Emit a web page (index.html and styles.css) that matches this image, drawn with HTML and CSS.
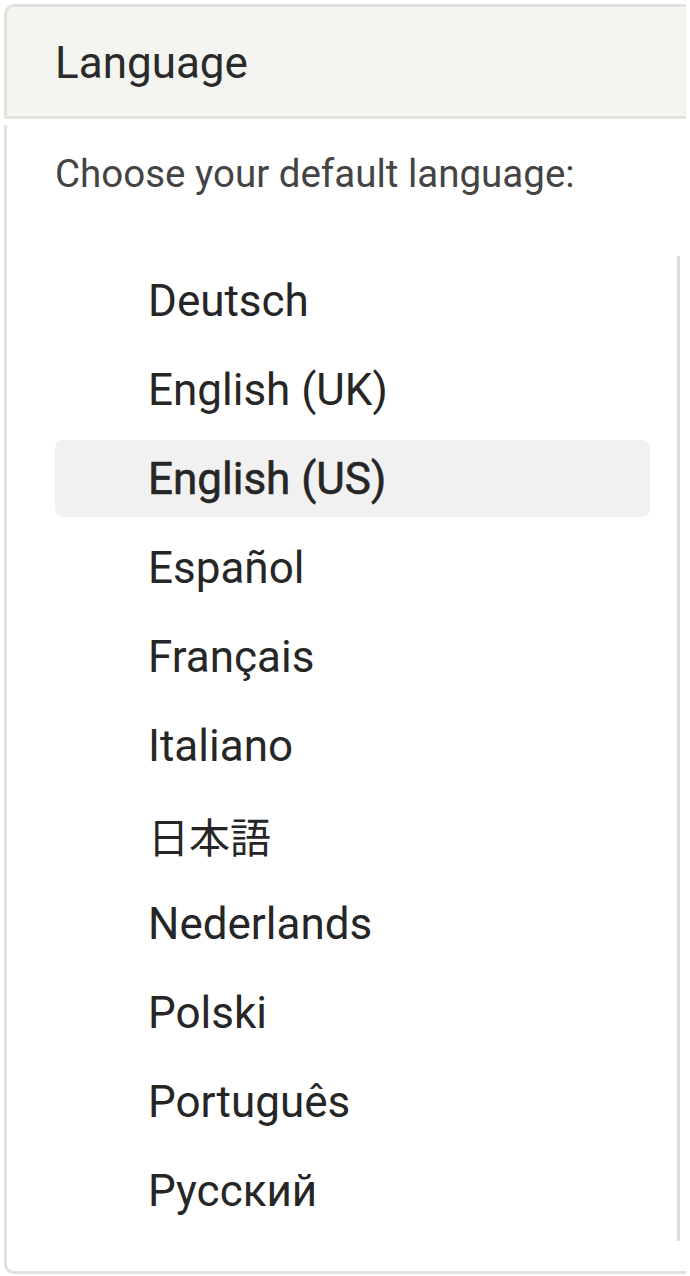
FILE: index.html
```html
<!DOCTYPE html>
<html lang="en">
<head>
<meta charset="utf-8">
<title>Language</title>
<link rel="stylesheet" href="styles.css">
</head>
<body>
<div class="panel">
  <div class="panel-header">
    <h2 class="panel-title">Language</h2>
  </div>
  <div class="panel-body">
    <p class="prompt">Choose your default language:</p>
    <ul class="lang-list">
      <li class="lang-item">Deutsch</li>
      <li class="lang-item">English (UK)</li>
      <li class="lang-item is-selected">English (US)</li>
      <li class="lang-item">Español</li>
      <li class="lang-item">Français</li>
      <li class="lang-item">Italiano</li>
      <li class="lang-item lang-cjk">日本語</li>
      <li class="lang-item">Nederlands</li>
      <li class="lang-item">Polski</li>
      <li class="lang-item">Português</li>
      <li class="lang-item">Русский</li>
    </ul>
  </div>
</div>
</body>
</html>
```
FILE: styles.css
```css
html, body {
  margin: 0;
  padding: 0;
  background: #ffffff;
}

body {
  font-family: Roboto, "Noto Sans", "Liberation Sans", sans-serif;
  color: #222222;
  padding: 4px 4px 0 4px;
}

.panel {
  width: 682px;
}

.panel-header {
  height: 107px;
  background: #f4f4f1;
  border-top: 3px solid #e1e1dd;
  border-left: 3px solid #e1e1dd;
  border-bottom: 3px solid #e1e1dd;
  border-top-left-radius: 10px;
  display: flex;
  align-items: center;
  padding-left: 48px;
  padding-top: 2px;
  box-sizing: content-box;
}

.panel-title {
  margin: 0;
  font-size: 44px;
  font-weight: 400;
  color: #2a2a2a;
  line-height: 1;
}

.panel-body {
  margin-top: 6px;
  border-left: 3px solid #e1e1dd;
  border-bottom: 3px solid #e1e1dd;
  border-bottom-left-radius: 10px;
  padding: 23px 0 30px 48px;
}

.prompt {
  margin: 0;
  font-size: 38.5px;
  line-height: 52px;
  color: #444444;
}

.lang-list {
  list-style: none;
  margin: 56px 0 0 0;
  padding: 0 27px 6px 0;
  border-right: 3px solid #dedede;
  width: 595px;
}

.lang-item {
  height: 89px;
  display: flex;
  align-items: center;
  padding-left: 93px;
  font-size: 44px;
  color: #262626;
  border-radius: 8px;
}

.lang-item.is-selected {
  background: #f1f1f1;
  font-weight: 400;
  -webkit-text-stroke: 0.6px #262626;
  height: 77px;
  margin: 6px 0;
}

.lang-cjk {
  font-family: "Noto Sans CJK JP", "Noto Sans CJK SC", sans-serif;
  font-size: 41px;
}
```
